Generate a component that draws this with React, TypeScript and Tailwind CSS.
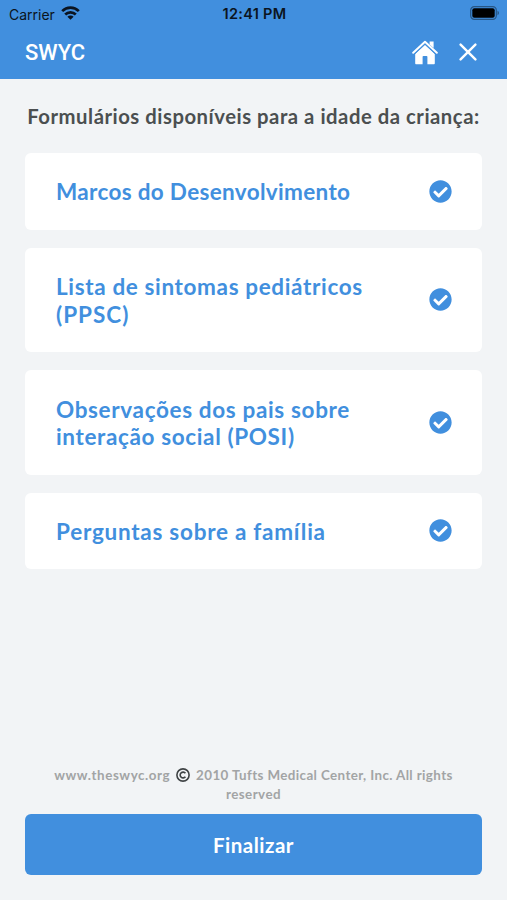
import { FaCheckCircle } from 'react-icons/fa';

// --- Types ---
interface FormItem {
  id: string;
  lines: { text: string; tracking: string }[];
}

// --- Data ---
const forms: FormItem[] = [
  { id: 'marcos', lines: [{ text: 'Marcos do Desenvolvimento', tracking: 'tracking-[0.33px]' }] },
  {
    id: 'ppsc',
    lines: [
      { text: 'Lista de sintomas pediátricos', tracking: 'tracking-[0.64px]' },
      { text: '(PPSC)', tracking: 'tracking-[1px]' },
    ],
  },
  {
    id: 'posi',
    lines: [
      { text: 'Observações dos pais sobre', tracking: 'tracking-[0.65px]' },
      { text: 'interação social (POSI)', tracking: 'tracking-[0.63px]' },
    ],
  },
  { id: 'familia', lines: [{ text: 'Perguntas sobre a família', tracking: 'tracking-[0.74px]' }] },
];

export default function App() {
  return (
    <div className="flex h-[900px] w-[507px] flex-col overflow-hidden bg-[#f2f4f6] font-['Lato',sans-serif]">
      <header className="h-[79px] shrink-0 bg-[#418fde]">
        <StatusBar />
        <nav className="flex h-12 items-center justify-between pr-[30px] pl-[25px] text-white">
          <span className="font-['Roboto',sans-serif] text-[22px] font-medium">SWYC</span>
          <div className="flex items-center gap-[21px]">
            <HomeIcon />
            <CloseIcon />
          </div>
        </nav>
      </header>

      <main className="flex flex-1 flex-col px-[25px]">
        <h1 className="mt-6 flex justify-center text-[20.3px] leading-[26px] font-bold tracking-[0.52px] whitespace-nowrap text-[#4b4f50]">
          Formulários disponíveis para a idade da criança:
        </h1>

        <ul className="mt-6 flex flex-col gap-[18px]">
          {forms.map((form) => (
            <FormCard key={form.id} form={form} />
          ))}
        </ul>

        <footer className="mt-auto mb-[25px]">
          <div className="text-center text-[13.4px] leading-[19px] font-bold tracking-[0.43px] text-[#a2a4a5]">
            <p className="flex items-center justify-center whitespace-nowrap">
              <span className="tracking-[0.55px]">www.theswyc.org</span>
              <CopyrightIcon />
              <span className="tracking-[0.38px]">2010 Tufts Medical Center, Inc. All rights</span>
            </p>
            <p>reserved</p>
          </div>
          <button className="mt-[10px] flex h-[61px] w-full items-center justify-center rounded-md bg-[#418fde] pt-0.5 text-[20.5px] font-bold tracking-[0.5px] text-white">
            Finalizar
          </button>
        </footer>
      </main>
    </div>
  );
}

function StatusBar() {
  return (
    <div className="grid h-7 grid-cols-3 items-center pr-[7px] pl-[9px] font-['Inter',sans-serif] text-[#0b1420]">
      <div className="flex items-center gap-1.5 text-[14px]">
        <span>Carrier</span>
        <WifiIcon />
      </div>
      <span className="text-center text-[14.5px] font-semibold tracking-[0.3px] whitespace-nowrap">12:41 PM</span>
      <div className="flex justify-end">
        <BatteryIcon />
      </div>
    </div>
  );
}

function FormCard({ form }: { form: FormItem }) {
  return (
    <li className="flex items-center justify-between rounded-md bg-white pt-[25.4px] pr-[30px] pb-[23.8px] pl-[31px] text-[#418fde]">
      <div className="text-[22.5px] leading-[27.6px] font-bold whitespace-nowrap">
        {form.lines.map((line) => (
          <p key={line.text} className={line.tracking}>
            {line.text}
          </p>
        ))}
      </div>
      <FaCheckCircle size={23} className="-mt-[1.6px]" />
    </li>
  );
}

// --- Icons ---
function WifiIcon() {
  return (
    <svg className="-mt-0.5" width="19" height="14" viewBox="0 0 19 14" fill="none" stroke="currentColor" strokeWidth="2.7">
      <path d="M1.2 5.1a11.8 11.8 0 0 1 16.6 0" />
      <path d="M4.2 8.5a7.5 7.5 0 0 1 10.6 0" />
      <path d="M9.5 13.8 6.4 10.8a4.3 4.3 0 0 1 6.2 0Z" fill="currentColor" stroke="none" />
    </svg>
  );
}

function BatteryIcon() {
  return (
    <svg className="-mt-0.5" width="30" height="14" viewBox="0 0 30 14">
      <rect x="0.7" y="0.7" width="25.6" height="12.6" rx="3.6" fill="none" stroke="#275685" strokeWidth="1.2" />
      <rect x="2.3" y="2.3" width="22.4" height="9.4" rx="2" fill="#000" />
      <path d="M27.5 4.8c1.9.7 1.9 3.7 0 4.4Z" fill="#275685" />
    </svg>
  );
}

function HomeIcon() {
  return (
    <svg width="26" height="25" viewBox="0 0 26 25" fill="currentColor">
      <path d="M13 4.8 22.8 14v9.2c0 .7-.4 1.1-1.1 1.1H15.4v-7.6c0-.5-.3-.8-.8-.8h-3.2c-.5 0-.8.3-.8.8v7.6H4.3c-.7 0-1.1-.4-1.1-1.1V14Z" />
      <path d="M17.6 1.5h4V8l-4-3.4Z" />
      <path d="M1.2 12.7 13 1.8l11.8 10.9" fill="none" stroke="currentColor" strokeWidth="2" strokeLinecap="round" strokeLinejoin="round" />
      <path d="M2.4 14.2 13 4.4l10.6 9.8" fill="none" stroke="#418fde" strokeWidth="0.8" />
    </svg>
  );
}

function CloseIcon() {
  return (
    <svg width="18" height="18" viewBox="0 0 18 18" stroke="currentColor" strokeWidth="2.4" strokeLinecap="round">
      <path d="M1.6 1.6l14.8 14.8M16.4 1.6 1.6 16.4" />
    </svg>
  );
}

function CopyrightIcon() {
  return (
    <svg className="mx-1.5 -mt-0.5" width="14" height="14" viewBox="0 0 14 14" fill="none" stroke="#3f4345" strokeWidth="1.6">
      <circle cx="7" cy="7" r="6.1" />
      <path d="M9.4 5.3a2.9 2.9 0 1 0 0 3.4" />
    </svg>
  );
}
